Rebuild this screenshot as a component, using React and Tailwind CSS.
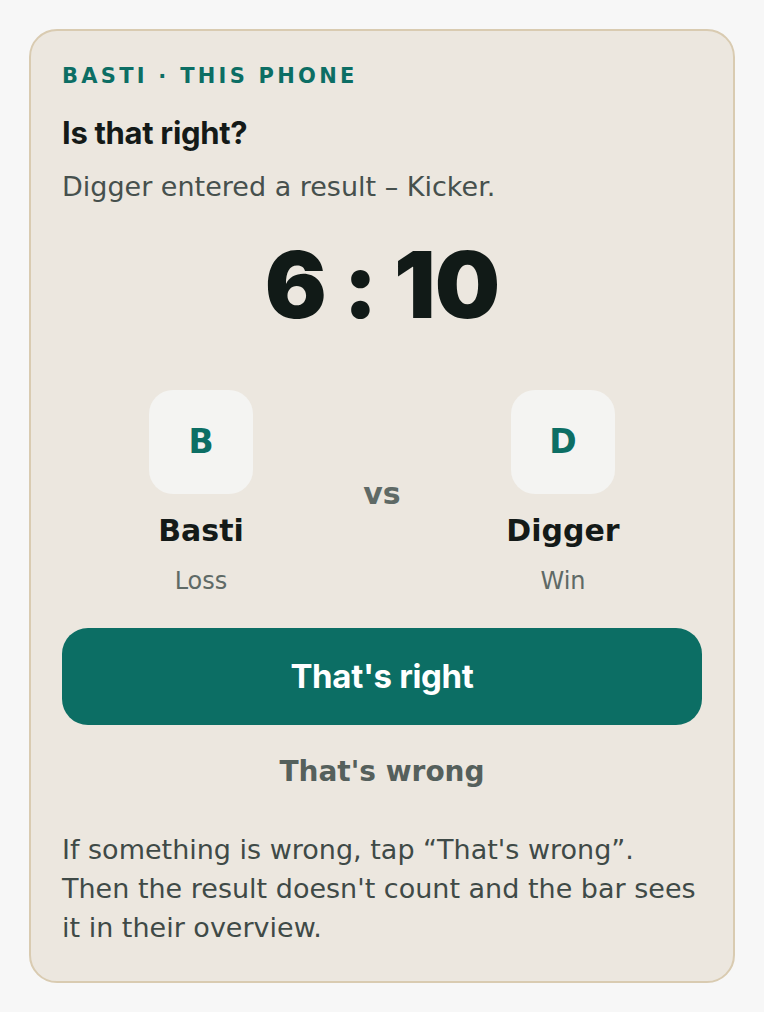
export default function App() {
  const players = [
    { initial: 'B', name: 'Basti', outcome: 'Loss' },
    { initial: 'D', name: 'Digger', outcome: 'Win' },
  ]

  const Player = ({ p }) => (
    <div className="flex flex-col items-center">
      <div className="w-[104px] h-[104px] rounded-[24px] bg-[#f4f4f2] flex items-center justify-center text-[33px] font-bold text-[#0c6e64]">
        {p.initial}
      </div>
      <div className="mt-[18px] text-[30px] leading-[38px] font-bold text-[#141a18]">{p.name}</div>
      <div className="mt-[16px] text-[24px] leading-[30px] text-[#5f6a66]">{p.outcome}</div>
    </div>
  )

  return (
    <div className="min-h-screen bg-[#f7f7f7] p-[29px] font-['DejaVu_Sans',sans-serif]">
      <div className="rounded-[28px] border-2 border-[#d9cbb1] bg-[#ece7df] px-[31px] pt-[31px] pb-[34px]">
        {/* Header */}
        <p className="text-[21px] leading-[28px] font-bold tracking-[0.155em] text-[#0c6e64]">BASTI · THIS PHONE</p>
        <h1 className="mt-[25px] text-[31px] leading-[36px] font-bold tracking-[-0.01em] text-[#141a18] font-['Inter',sans-serif]">
          Is that right?
        </h1>
        <p className="mt-[18px] text-[27px] leading-[36px] text-[#46504d]">Digger entered a result – Kicker.</p>

        {/* Score */}
        <div className="mt-[28px] text-center text-[92px] leading-[104px] font-black tracking-[-0.01em] text-[#111a17] font-['Inter',sans-serif]">
          6 : 10
        </div>

        {/* Players */}
        <div className="mt-[53px] grid grid-cols-[1fr_84px_1fr] items-start">
          <Player p={players[0]} />
          <div className="pt-[84px] text-center text-[30px] leading-[40px] font-bold text-[#5f6a66]">vs</div>
          <Player p={players[1]} />
        </div>

        {/* Actions */}
        <button className="mt-[32px] w-full h-[97px] rounded-[26px] bg-[#0c6e64] text-white text-[33px] font-bold tracking-[-0.01em] font-['Inter',sans-serif]">
          That's right
        </button>
        <button className="mt-[25px] w-full h-[44px] text-[28px] font-bold text-[#55605c]">That's wrong</button>

        <p className="mt-[36px] text-[27px] leading-[39px] text-[#3f4a47]">
          If something is wrong, tap “That's wrong”. Then the result doesn't count and the bar sees it in their overview.
        </p>
      </div>
    </div>
  )
}
